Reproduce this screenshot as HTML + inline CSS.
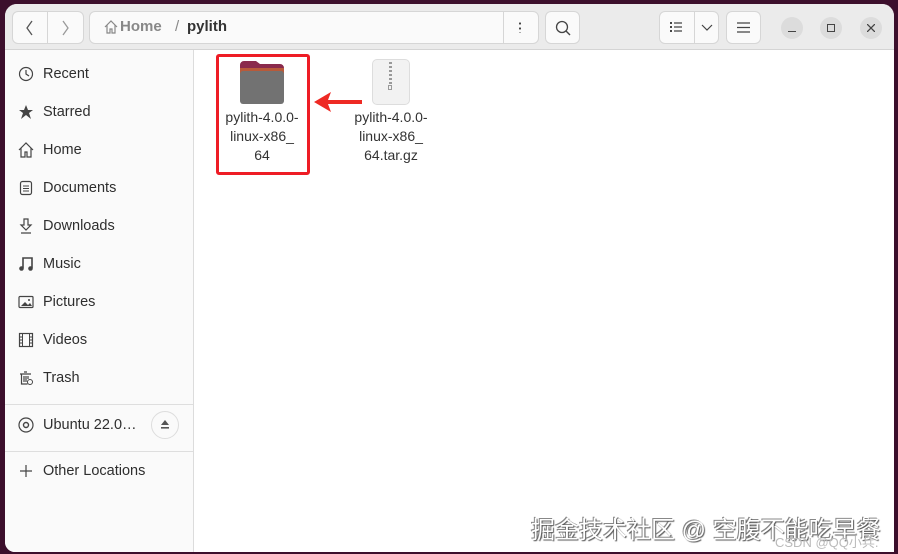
<!DOCTYPE html>
<html><head><meta charset="utf-8"><style>
*{box-sizing:border-box;margin:0;padding:0}
body{width:898px;height:554px;background:#3c0f2c;position:relative;overflow:hidden;font-family:"Liberation Sans","Noto Sans CJK SC",sans-serif;color:#333}
.win{position:absolute;left:5px;top:4px;width:889px;height:548px;background:#fff;border-radius:12px 12px 0 10px;overflow:hidden}
.hdr{position:absolute;left:0;top:0;right:0;height:46px;background:#ebebeb;border-bottom:1px solid #d4d4d4}
.btn{position:absolute;top:7px;height:33px;background:#fafafa;border:1px solid #d6d6d6;border-radius:6px}
.side{position:absolute;left:0;top:46px;width:189px;bottom:0;background:#fafafa;border-right:1px solid #dcdcdc}
.it{position:absolute;left:38px;font-size:14.5px;color:#2e2e2e}
.ic{position:absolute;left:13px;width:16px;height:16px}
.sep{position:absolute;left:0;right:0;height:1px;background:#dedede}
.lbl{position:absolute;font-size:14px;color:#333;text-align:center;line-height:19px}
.wc{position:absolute;top:13px;width:22px;height:22px;border-radius:50%;background:#dcdcdc}
</style></head><body>
<div class="win">
 <div class="hdr">
  <div class="btn" style="left:7px;width:72px"></div>
  <div style="position:absolute;left:42px;top:7px;width:1px;height:33px;background:#d6d6d6"></div>
  <svg style="position:absolute;left:20px;top:16px" width="10" height="16"><path d="M7 1L2 8l5 7" fill="none" stroke="#555" stroke-width="1.3"/></svg>
  <svg style="position:absolute;left:56px;top:16px" width="10" height="16"><path d="M2 1l5 7-5 7" fill="none" stroke="#999" stroke-width="1.3"/></svg>
  <div class="btn" style="left:84px;width:450px"></div>
  <div style="position:absolute;left:498px;top:7px;width:1px;height:33px;background:#d6d6d6"></div>
  <svg style="position:absolute;left:99px;top:16px" width="14" height="14"><path d="M1 7L7 1l6 6M3 5v8h3V9h2v4h3V5" fill="none" stroke="#888" stroke-width="1.2"/></svg>
  <div style="position:absolute;left:115px;top:14px;font-size:15px;font-weight:bold;color:#888">Home</div>
  <div style="position:absolute;left:170px;top:14px;font-size:15px;color:#888">/</div>
  <div style="position:absolute;left:182px;top:14px;font-size:15px;font-weight:bold;color:#333">pylith</div>
  <div style="position:absolute;left:514px;top:17px;width:2px;height:12px;background:radial-gradient(circle,#444 1px,transparent 1.2px) 0 0/2px 5px"></div>
  <div class="btn" style="left:540px;width:35px"></div>
  <svg style="position:absolute;left:550px;top:16px" width="16" height="16"><circle cx="7" cy="7" r="5.5" fill="none" stroke="#444" stroke-width="1.3"/><path d="M11 11l4 4" stroke="#444" stroke-width="1.4"/></svg>
  <div class="btn" style="left:654px;width:60px"></div>
  <div style="position:absolute;left:689px;top:7px;width:1px;height:33px;background:#d6d6d6"></div>
  <svg style="position:absolute;left:664px;top:17px" width="14" height="13"><path d="M1 2h2M1 6h2M1 10h2" stroke="#444" stroke-width="2"/><path d="M5 2h8M5 6h8M5 10h8" stroke="#444" stroke-width="1.2"/></svg>
  <svg style="position:absolute;left:696px;top:20px" width="12" height="8"><path d="M1 1l5 5 5-5" fill="none" stroke="#444" stroke-width="1.2"/></svg>
  <div class="btn" style="left:721px;width:35px"></div>
  <svg style="position:absolute;left:732px;top:18px" width="13" height="11"><path d="M0 1h13M0 5.5h13M0 10h13" stroke="#444" stroke-width="1.2"/></svg>
  <div class="wc" style="left:776px"></div><div style="position:absolute;left:783px;top:27px;width:8px;height:1.3px;background:#444"></div>
  <div class="wc" style="left:815px"></div><div style="position:absolute;left:822px;top:20px;width:8px;height:8px;border:1.3px solid #444"></div>
  <div class="wc" style="left:855px"></div><svg style="position:absolute;left:862px;top:20px" width="8" height="8"><path d="M0 0l8 8M8 0L0 8" stroke="#444" stroke-width="1.3"/></svg>
 </div>
 <div class="side">
  <svg class="ic" style="top:16px" viewBox="0 0 16 16"><circle cx="8" cy="8" r="6.5" fill="none" stroke="#444" stroke-width="1.2"/><path d="M8 4v4l3 2" fill="none" stroke="#444" stroke-width="1.2"/></svg><div class="it" style="top:16px">Recent</div>
  <svg class="ic" style="top:54px" viewBox="0 0 16 16"><path d="M8 1l2 5h5l-4 3 2 6-5-4-5 4 2-6-4-3h5z" fill="#444"/></svg><div class="it" style="top:54px">Starred</div>
  <svg class="ic" style="top:92px" viewBox="0 0 16 16"><path d="M1 8l7-7 7 7M3 6v9h4v-5h2v5h4V6" fill="none" stroke="#444" stroke-width="1.2"/></svg><div class="it" style="top:92px">Home</div>
  <svg class="ic" style="top:130px" viewBox="0 0 16 16"><rect x="2.5" y="1.5" width="11" height="13" rx="2" fill="none" stroke="#444" stroke-width="1.2"/><path d="M5 6h6M5 8.5h6M5 11h6" stroke="#444"/></svg><div class="it" style="top:130px">Documents</div>
  <svg class="ic" style="top:168px" viewBox="0 0 16 16"><path d="M6 1h4v6h3l-5 5-5-5h3zM3 15h10" fill="none" stroke="#444" stroke-width="1.2"/></svg><div class="it" style="top:168px">Downloads</div>
  <svg class="ic" style="top:206px" viewBox="0 0 16 16"><path d="M5 12V2h9v10" fill="none" stroke="#444" stroke-width="1.6"/><circle cx="3.5" cy="12.5" r="2.3" fill="#444"/><circle cx="12.5" cy="12.5" r="2.3" fill="#444"/></svg><div class="it" style="top:206px">Music</div>
  <svg class="ic" style="top:244px" viewBox="0 0 16 16"><rect x="1" y="2.5" width="14" height="11" rx="1" fill="none" stroke="#444" stroke-width="1.2"/><path d="M3 12l4-4 3 3 2-2 2 3z" fill="#444"/><circle cx="11" cy="6" r="1" fill="#444"/></svg><div class="it" style="top:244px">Pictures</div>
  <svg class="ic" style="top:282px" viewBox="0 0 16 16"><rect x="1.5" y="1.5" width="13" height="13" fill="none" stroke="#444" stroke-width="1.2"/><path d="M4.5 1.5v13M11.5 1.5v13M1.5 5h3M1.5 8h3M1.5 11h3M11.5 5h3M11.5 8h3M11.5 11h3" stroke="#444"/></svg><div class="it" style="top:282px">Videos</div>
  <svg class="ic" style="top:320px" viewBox="0 0 16 16"><path d="M2 4h11M6 2h3M3.5 4v10h6M6 6v6M8 6v6M10 6v3" fill="none" stroke="#444" stroke-width="1.2"/><circle cx="12" cy="12" r="2.5" fill="none" stroke="#444"/></svg><div class="it" style="top:320px">Trash</div>
  <div class="sep" style="top:354px"></div>
  <svg class="ic" style="top:367px" viewBox="0 0 16 16"><circle cx="8" cy="8" r="7" fill="none" stroke="#444" stroke-width="1.2"/><circle cx="8" cy="8" r="2.5" fill="none" stroke="#444" stroke-width="1.4"/></svg><div class="it" style="top:367px">Ubuntu 22.0…</div>
  <div style="position:absolute;left:146px;top:361px;width:28px;height:28px;border:1px solid #ddd;border-radius:50%"></div>
  <svg style="position:absolute;left:155px;top:369px" width="10" height="10"><path d="M5 1l4 5H1z" fill="#555"/><rect x="1" y="8" width="8" height="1.6" fill="#555"/></svg>
  <div class="sep" style="top:401px"></div>
  <svg class="ic" style="top:413px" viewBox="0 0 16 16"><path d="M8 2v12M2 8h12" stroke="#444" stroke-width="1.2"/></svg><div class="it" style="top:413px">Other Locations</div>
 </div>
 <svg style="position:absolute;left:233px;top:55px" width="48" height="46"><path d="M2 6a4 4 0 0 1 4-4h12l4 3h20a4 4 0 0 1 4 4v5H2z" fill="#8a2a4c"/><path d="M2 9h44v6H2z" fill="#b85a3a"/><rect x="2" y="12" width="44" height="33" rx="3" fill="#727272"/></svg>
 <div class="lbl" style="left:211px;top:104px;width:92px">pylith-4.0.0-<br>linux-x86_<br>64</div>
 <div style="position:absolute;left:211px;top:50px;width:94px;height:121px;border:3px solid #ee1c25;border-radius:3px"></div>
 <svg style="position:absolute;left:308px;top:86px" width="50" height="24"><path d="M1 12l17-10-3 8h34v4H15l3 8z" fill="#ee2a24"/></svg>
 <div style="position:absolute;left:367px;top:55px;width:38px;height:46px;background:#f2f2f2;border:1px solid #ddd;border-radius:5px"></div>
 <div style="position:absolute;left:384px;top:58px;width:3px;height:24px;background:repeating-linear-gradient(#999 0 2px,#f2f2f2 2px 4px)"></div>
 <div style="position:absolute;left:383px;top:81px;width:4px;height:5px;border:1px solid #999"></div>
 <div class="lbl" style="left:340px;top:104px;width:92px">pylith-4.0.0-<br>linux-x86_<br>64.tar.gz</div>
 <div style="position:absolute;left:526px;top:506px;font-size:24px;color:#fff;text-shadow:1px 1px 1px #555,-1px -1px 0 #888">掘金技术社区 @ 空腹不能吃早餐</div>
 <div style="position:absolute;left:770px;top:528px;font-size:13px;color:#bbb">CSDN @QQ小兵.</div>
</div>
</body></html>
